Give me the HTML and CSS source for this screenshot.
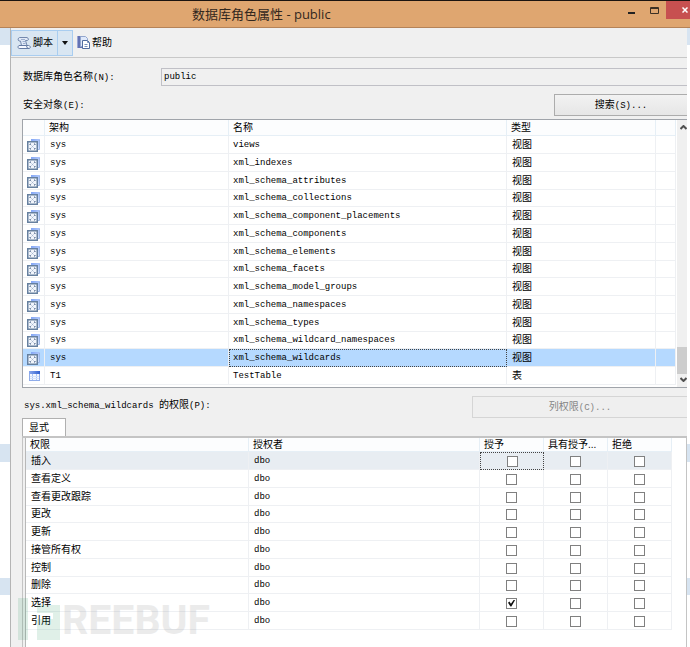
FILE: index.html
```html
<!DOCTYPE html>
<html lang="zh-CN">
<head>
<meta charset="utf-8">
<title>数据库角色属性 - public</title>
<link rel="stylesheet" href="styles.css">
</head>
<body>
<svg class="defs" aria-hidden="true">
  <linearGradient id="blue" x1="0" y1="0" x2="1" y2="1"><stop offset="0" stop-color="#7fa3f5"/><stop offset="1" stop-color="#dbe8ff"/></linearGradient>
  <linearGradient id="deep" x1="0" y1="0" x2="1" y2="0"><stop offset="0" stop-color="#8aa9ee"/><stop offset="1" stop-color="#2f5fd0"/></linearGradient>
  <symbol id="view" viewBox="0 0 14 14">
    <path d="M4 1h9v10H4z" fill="url(#blue)"/>
    <path d="M12.500 2v9.500H11" fill="none" stroke="#9db6e6"/>
    <rect x=".75" y="3.750" width="9.500" height="9.500" fill="#f1f5fb" stroke="#66809f" stroke-width="1.500"/>
    <path d="M3 7V6h1M7 6h1v1M8 10v1H7M4 11H3v-1" fill="none" stroke="#51698c"/>
    <path d="M4.500 7.500l2 2M6.500 7.500l-2 2" stroke="#a9b8cf"/>
  </symbol>
  <symbol id="table" viewBox="0 0 14 14">
    <rect x="2.500" y="2.500" width="10" height="9" fill="#f4f8ff" stroke="#8facea"/>
    <path d="M2 2h11v3H2z" fill="url(#deep)"/>
    <path d="M5.500 5v6M9.500 5v6" fill="none" stroke="#a9c4f5"/>
    <path d="M3 7.500h9M3 9.500h9" stroke="#d5e3fb"/>
  </symbol>
</svg>
<header class="titlebar">
  <h1>数据库角色属性 - public</h1>
  <div class="controls">
    <button class="ctl" aria-label="最小化"><svg width="8" height="9"><path d="M0 6h7v2H0z" fill="#222"/></svg></button>
    <button class="ctl" aria-label="最大化"><svg width="9" height="7"><path d="M.5.5h8v6h-8zM0 1.500h9" fill="none" stroke="#3c3024"/></svg></button>
    <button class="ctl close" aria-label="关闭"><svg width="6" height="6"><path d="M.5.5l5 5M5.500.5l-5 5" stroke="#fff" stroke-width="1.500"/></svg></button>
  </div>
</header>
<main class="window">
  <div class="toolbar">
    <div class="split">
      <button class="tool script"><svg width="16" height="16" viewBox="0 0 16 16"><path d="M3.500 2.500h7.500c1.500.5 2 2.500.5 3H9.500l1.500 5H5.500L4.500 6H3C1.500 5 2 3 3.500 2.500z" fill="#dfe8f6" stroke="#7388ad"/><path d="M5 4.500h4M6.500 6.500h2.500M7 8.500h2.500" fill="none" stroke="#9db0d0"/><path d="M3 10.500h7.500c0 2 1 3 2.500 3H4c-2.500 0-2.500-2-1-3zM13 13.500c2 0 1.500-3-.5-3H11" fill="#f5f8ff" stroke="#6279a3"/></svg>脚本</button>
      <button class="drop" aria-label="脚本选项"><svg width="6" height="4"><path d="M0 0h6L3 4z" fill="#111"/></svg></button>
    </div>
    <button class="tool help"><svg width="15" height="15" viewBox="0 0 15 15"><path d="M1 1h5v12H1z" fill="#6473b4"/><path d="M1.500 1v12" stroke="#9ca6d5"/><path d="M4.500 1.500h5l2 2v8h-7z" fill="#dfe9fb" stroke="#93a6cd"/><path d="M6.500 5.500h5l2 2v6h-7z" fill="#fff" stroke="#526d9f"/><path d="M11.500 5.500v2h2M8.500 9.500h3M8.500 11.500h3" fill="none" stroke="#7891bd"/></svg>帮助</button>
  </div>
  <div class="form">
    <div class="name-row">
      <label for="role">数据库角色名称<span class="mono">(N):</span></label>
      <input id="role" class="role" type="text" value="public" readonly>
    </div>
    <div class="search-row">
      <span>安全对象<span class="mono">(E):</span></span>
      <button class="btn search">搜索<span class="mono">(S)...</span></button>
    </div>
    <div class="listbox">
      <table class="grid objects">
        <colgroup><col class="c-icon"><col class="c-schema"><col><col class="c-type"><col class="c-rest"></colgroup>
        <thead><tr><th></th><th>架构</th><th>名称</th><th>类型</th><th></th></tr></thead>
        <tbody>
          <tr><td><svg class="ico"><use href="#view"/></svg></td><td class="mono">sys</td><td class="mono">views</td><td>视图</td><td></td></tr>
          <tr><td><svg class="ico"><use href="#view"/></svg></td><td class="mono">sys</td><td class="mono">xml_indexes</td><td>视图</td><td></td></tr>
          <tr><td><svg class="ico"><use href="#view"/></svg></td><td class="mono">sys</td><td class="mono">xml_schema_attributes</td><td>视图</td><td></td></tr>
          <tr><td><svg class="ico"><use href="#view"/></svg></td><td class="mono">sys</td><td class="mono">xml_schema_collections</td><td>视图</td><td></td></tr>
          <tr><td><svg class="ico"><use href="#view"/></svg></td><td class="mono">sys</td><td class="mono">xml_schema_component_placements</td><td>视图</td><td></td></tr>
          <tr><td><svg class="ico"><use href="#view"/></svg></td><td class="mono">sys</td><td class="mono">xml_schema_components</td><td>视图</td><td></td></tr>
          <tr><td><svg class="ico"><use href="#view"/></svg></td><td class="mono">sys</td><td class="mono">xml_schema_elements</td><td>视图</td><td></td></tr>
          <tr><td><svg class="ico"><use href="#view"/></svg></td><td class="mono">sys</td><td class="mono">xml_schema_facets</td><td>视图</td><td></td></tr>
          <tr><td><svg class="ico"><use href="#view"/></svg></td><td class="mono">sys</td><td class="mono">xml_schema_model_groups</td><td>视图</td><td></td></tr>
          <tr><td><svg class="ico"><use href="#view"/></svg></td><td class="mono">sys</td><td class="mono">xml_schema_namespaces</td><td>视图</td><td></td></tr>
          <tr><td><svg class="ico"><use href="#view"/></svg></td><td class="mono">sys</td><td class="mono">xml_schema_types</td><td>视图</td><td></td></tr>
          <tr><td><svg class="ico"><use href="#view"/></svg></td><td class="mono">sys</td><td class="mono">xml_schema_wildcard_namespaces</td><td>视图</td><td></td></tr>
          <tr class="selected"><td><svg class="ico"><use href="#view"/></svg></td><td class="mono">sys</td><td class="mono focus">xml_schema_wildcards</td><td>视图</td><td></td></tr>
          <tr><td><svg class="ico"><use href="#table"/></svg></td><td class="mono">T1</td><td class="mono">TestTable</td><td>表</td><td></td></tr>
        </tbody>
      </table>
      <div class="scrollbar">
        <svg width="7" height="5"><path d="M.5 4l3-3 3 3" fill="none" stroke="#505050" stroke-width="2"/></svg>
        <div class="thumb"></div>
        <svg width="7" height="5"><path d="M.5 1l3 3 3-3" fill="none" stroke="#505050" stroke-width="2"/></svg>
      </div>
    </div>
    <div class="perm-row">
      <span><span class="mono">sys.xml_schema_wildcards </span>的权限<span class="mono">(P):</span></span>
      <button class="btn columns" disabled>列权限<span class="mono">(C)...</span></button>
    </div>
    <button class="tab">显式</button>
    <div class="panel">
      <table class="grid perms">
        <colgroup><col class="c-perm"><col><col class="c-check"><col class="c-check"><col class="c-check"></colgroup>
        <thead><tr><th>权限</th><th>授权者</th><th>授予</th><th>具有授予...</th><th>拒绝</th></tr></thead>
        <tbody>
          <tr class="current"><td>插入</td><td class="mono">dbo</td><td class="focus"><input type="checkbox" aria-label="插入 授予"></td><td><input type="checkbox" aria-label="插入 具有授予"></td><td><input type="checkbox" aria-label="插入 拒绝"></td></tr>
          <tr><td>查看定义</td><td class="mono">dbo</td><td><input type="checkbox" aria-label="查看定义 授予"></td><td><input type="checkbox" aria-label="查看定义 具有授予"></td><td><input type="checkbox" aria-label="查看定义 拒绝"></td></tr>
          <tr><td>查看更改跟踪</td><td class="mono">dbo</td><td><input type="checkbox" aria-label="查看更改跟踪 授予"></td><td><input type="checkbox" aria-label="查看更改跟踪 具有授予"></td><td><input type="checkbox" aria-label="查看更改跟踪 拒绝"></td></tr>
          <tr><td>更改</td><td class="mono">dbo</td><td><input type="checkbox" aria-label="更改 授予"></td><td><input type="checkbox" aria-label="更改 具有授予"></td><td><input type="checkbox" aria-label="更改 拒绝"></td></tr>
          <tr><td>更新</td><td class="mono">dbo</td><td><input type="checkbox" aria-label="更新 授予"></td><td><input type="checkbox" aria-label="更新 具有授予"></td><td><input type="checkbox" aria-label="更新 拒绝"></td></tr>
          <tr><td>接管所有权</td><td class="mono">dbo</td><td><input type="checkbox" aria-label="接管所有权 授予"></td><td><input type="checkbox" aria-label="接管所有权 具有授予"></td><td><input type="checkbox" aria-label="接管所有权 拒绝"></td></tr>
          <tr><td>控制</td><td class="mono">dbo</td><td><input type="checkbox" aria-label="控制 授予"></td><td><input type="checkbox" aria-label="控制 具有授予"></td><td><input type="checkbox" aria-label="控制 拒绝"></td></tr>
          <tr><td>删除</td><td class="mono">dbo</td><td><input type="checkbox" aria-label="删除 授予"></td><td><input type="checkbox" aria-label="删除 具有授予"></td><td><input type="checkbox" aria-label="删除 拒绝"></td></tr>
          <tr><td>选择</td><td class="mono">dbo</td><td><input type="checkbox" aria-label="选择 授予" checked></td><td><input type="checkbox" aria-label="选择 具有授予"></td><td><input type="checkbox" aria-label="选择 拒绝"></td></tr>
          <tr><td>引用</td><td class="mono">dbo</td><td><input type="checkbox" aria-label="引用 授予"></td><td><input type="checkbox" aria-label="引用 具有授予"></td><td><input type="checkbox" aria-label="引用 拒绝"></td></tr>
        </tbody>
      </table>
    </div>
  </div>
  <div class="watermark">
    <svg width="42" height="42"><path d="M0 0h10v42H0zM19 7h23v35H19v-21h16v-6H19z" fill="#2c9a63"/></svg>
    <span>REEBUF</span>
  </div>
</main>
</body>
</html>
```
FILE: styles.css
```css
* { box-sizing: border-box; }

body {
  margin: 0;
  min-height: 100vh;
  display: flex;
  flex-direction: column;
  color: #000;
  font: 10px/14px "Liberation Sans", "Noto Sans CJK SC", sans-serif;
  background: linear-gradient(#fff 28px, #d7e4f1 28px 45px, #fff 45px 444px, #d7e4f1 444px 462px, #fff 462px 578px, #d7e4f1 578px 595px, #fff 595px);
}

button, input { font: inherit; color: inherit; margin: 0; padding: 0; border-radius: 0; }
button { border: 0; background: none; }
.defs { position: absolute; width: 0; height: 0; }
.mono { font-family: "Liberation Mono", monospace; font-size: 9px; white-space: pre; }

.titlebar {
  display: flex;
  height: 28px;
  background: #dfa670;
  border-top: 1px solid #1c1410;
  border-bottom: 1px solid #b58358;
}
.titlebar h1 {
  flex: 1;
  margin: 0;
  padding-left: 192px;
  font: 13px/26px "Open Sans", "Noto Sans CJK SC", sans-serif;
  color: #33281e;
}
.controls { display: flex; }
.ctl { width: 23px; height: 18px; display: flex; align-items: center; justify-content: center; }
.close { width: 24px; padding-left: 14px; background: #c75050; }

.window {
  position: relative;
  flex: 1;
  display: flex;
  flex-direction: column;
  margin: 0 3px 0 10px;
  background: #f0f0f0;
  border-left: 1px solid #b4b4b4;
}

.toolbar {
  display: flex;
  align-items: center;
  height: 30px;
  border-bottom: 1px solid #c8c8c8;
}
.split { display: flex; height: 26px; border: 1px solid #a9cdf0; background: #d9e6f2; }
.tool { display: flex; align-items: center; gap: 1px; padding: 0 2px 0 3px; }
.script { padding: 0 4px; }
.drop { width: 15px; border-left: 1px solid #a9cdf0; display: flex; align-items: center; justify-content: center; }

.form { flex: 1; display: flex; flex-direction: column; padding: 10px 0 0 11px; }
.name-row { display: flex; align-items: center; height: 18px; padding-left: 1px; }
.name-row label { width: 138px; }
.role { flex: 1; min-width: 0; height: 18px; padding: 0 2px; border: 1px solid #c0c0c6; border-right: 0; background: #f0f0f0; font-family: "Liberation Mono", monospace; font-size: 9px; }

.search-row, .perm-row { display: flex; align-items: center; justify-content: space-between; }
.search-row { height: 33px; padding: 5px 0 0 1px; }
.perm-row { height: 30px; padding: 4px 0 0 2px; }
.btn { height: 22px; border: 1px solid #acacac; border-right: 0; background: linear-gradient(#f2f2f2, #e6e6e6); }
.search { width: 133px; }
.columns { width: 215px; margin-top: 4px; border-color: #d5d5d5; background: #efefef; color: #858585; align-self: flex-start; }

.listbox { display: flex; height: 269px; border: 1px solid #a0a4aa; border-right: 0; background: #fff; }
.grid { width: 100%; table-layout: fixed; border-spacing: 0; align-self: flex-start; }
.grid tr { height: 18px; }
.grid tbody tr:nth-child(4n) { height: 17px; }
.grid th, .grid td {
  padding: 0 0 0 4px;
  text-align: left;
  font-weight: 400;
  border-right: 1px solid #eef0f3;
  border-bottom: 1px solid #eef0f3;
  overflow: hidden;
  white-space: nowrap;
}
.grid th { line-height: 13px; background: #fcfdfe; border-color: #e6eff6; }
.objects { flex: 1; width: auto; margin-right: 1px; }
.objects thead tr { height: 16px; }
.perms thead tr { height: 14px; }
.objects td:nth-child(2) { padding-left: 5px; }
.objects td:nth-child(4) { padding-left: 5px; }
.c-icon { width: 22px; }
.c-schema { width: 184px; }
.c-type { width: 149px; }
.c-rest { width: 20px; }
.ico { display: block; width: 14px; height: 14px; }
.grid .selected td { background: #b5d9ff; }
.grid td.focus { border: 1px dotted #444; }
.objects td.focus { padding-left: 3px; }

.scrollbar { display: flex; flex-direction: column; align-items: flex-end; width: 10px; padding: 5px 0; background: #f0f0f0; }
.thumb { width: 10px; height: 27px; margin: auto 0 3px; background: #cdcdcd; }

.tab { align-self: flex-start; width: 44px; height: 18px; padding-left: 6px; text-align: left; border: 1px solid #b0b0b0; border-bottom: 0; background: #fff; }
.panel { flex: 1; padding: 0 14px 0 3px; border: 1px solid #c4c4c4; border-top-width: 2px; border-bottom: 0; background: linear-gradient(90deg, #f0f0f0 2px, #b8b8b8 2px 3px, #fff 3px); }
.c-perm { width: 223px; }
.c-check { width: 64px; }
.perms td:first-child { padding-left: 5px; }
.perms td:nth-child(2) { padding-left: 5px; }
.perms td:nth-child(n+3) { padding: 0; text-align: center; }
.current td { background: #e8edf2; }

input[type="checkbox"] {
  appearance: none;
  display: block;
  width: 11px;
  height: 11px;
  margin: 1px auto 0;
  border: 1px solid #808080;
  background: #fff;
}
input[type="checkbox"]:checked::before {
  content: "";
  display: block;
  width: 7px;
  height: 7px;
  margin: 1px;
  background: #111;
  clip-path: polygon(0 45%, 20% 30%, 42% 60%, 85% 0, 100% 10%, 48% 100%, 35% 100%);
}

.watermark {
  position: absolute;
  left: 7px;
  bottom: 7px;
  display: flex;
  align-items: center;
  gap: 2px;
  opacity: 0.14;
  pointer-events: none;
}
.watermark span { padding-top: 3px; font: 700 41px/39px Roboto, sans-serif; color: #777; }
```
